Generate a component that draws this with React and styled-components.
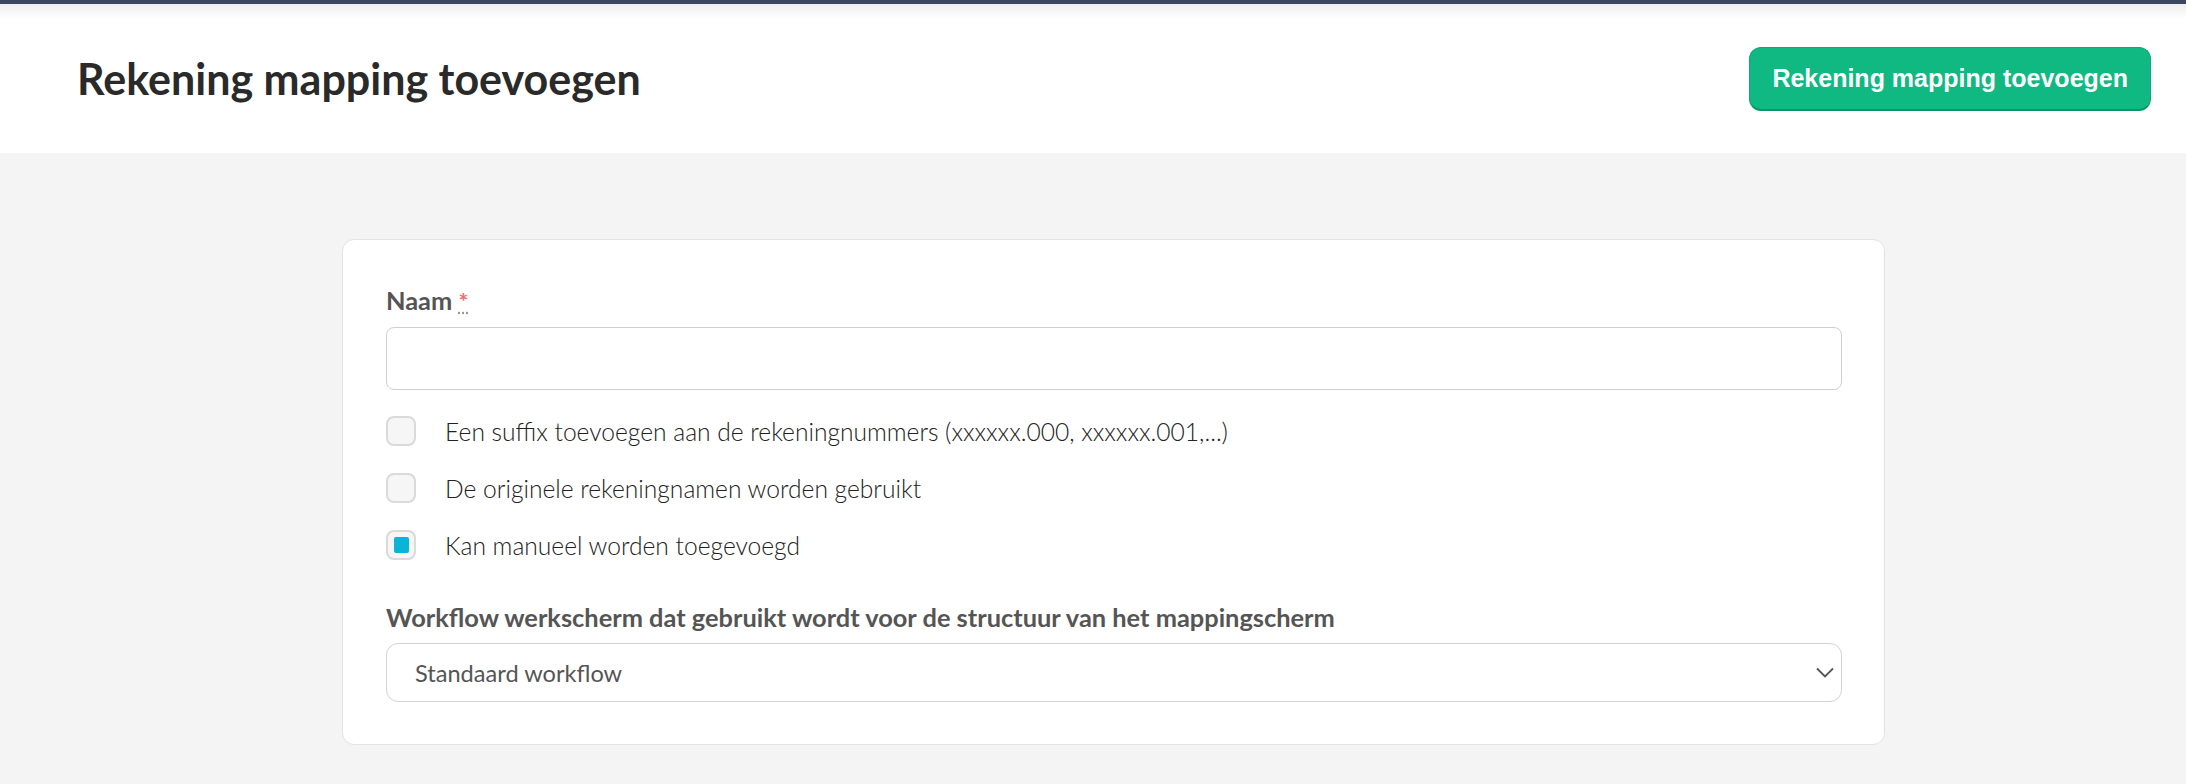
import React, { useState } from "react";
import styled, { createGlobalStyle } from "styled-components";

const GlobalStyle = createGlobalStyle`
  * {
    box-sizing: border-box;
  }
  body {
    margin: 0;
    background: #f4f4f4;
    font-family: Lato, "Open Sans", sans-serif;
    color: #333;
  }
`;

const options = [
  { id: "suffix", label: "Een suffix toevoegen aan de rekeningnummers (xxxxxx.000, xxxxxx.001,...)" },
  { id: "original", label: "De originele rekeningnamen worden gebruikt" },
  { id: "manual", label: "Kan manueel worden toegevoegd" },
];

const App = () => {
  const [checked, setChecked] = useState({ suffix: false, original: false, manual: true });
  const [name, setName] = useState("");

  const toggle = (id) => setChecked({ ...checked, [id]: !checked[id] });

  return (
    <>
      <GlobalStyle />
      <Page>
        <TopBar />
        <Header>
          <Title>Rekening mapping toevoegen</Title>
          <PrimaryButton>Rekening mapping toevoegen</PrimaryButton>
        </Header>
        <Main>
          <Card>
            <Field>
              <Label htmlFor="naam">
                Naam <Required title="verplicht">*</Required>
              </Label>
              <TextInput id="naam" value={name} onChange={(e) => setName(e.target.value)} />
            </Field>

            <CheckList>
              {options.map((opt) => (
                <CheckRow key={opt.id} onClick={() => toggle(opt.id)}>
                  <CheckBox>{checked[opt.id] && <CheckMark />}</CheckBox>
                  <CheckLabel>{opt.label}</CheckLabel>
                </CheckRow>
              ))}
            </CheckList>

            <Field>
              <Label htmlFor="workflow">
                Workflow werkscherm dat gebruikt wordt voor de structuur van het mappingscherm
              </Label>
              <SelectWrap>
                <Select id="workflow" defaultValue="standaard">
                  <option value="standaard">Standaard workflow</option>
                </Select>
                <Chevron width="18" height="11" viewBox="0 0 18 11" fill="none">
                  <path d="M1 1.5 L9 9.5 L17 1.5" stroke="#555" strokeWidth="1.8" />
                </Chevron>
              </SelectWrap>
            </Field>
          </Card>
        </Main>
      </Page>
    </>
  );
};

export default App;

const Page = styled.div`
  min-height: 784px;
  background: #f4f4f4;
`;

const TopBar = styled.div`
  height: 4px;
  background: #3a4862;
`;

const Header = styled.header`
  height: 149px;
  display: flex;
  align-items: center;
  justify-content: space-between;
  padding: 0 35px 0 77px;
  background: linear-gradient(#efefef 0px, #ffffff 16px);
`;

const Title = styled.h1`
  margin: 0;
  font-family: Lato, sans-serif;
  font-weight: 700;
  font-size: 43px;
  color: #2a2a2a;
`;

const PrimaryButton = styled.button`
  height: 64px;
  padding: 0 22px;
  border: 1px solid #0ea874;
  border-bottom: 2px solid #0b9466;
  border-radius: 12px;
  background: #0fb981;
  color: #fff;
  font-family: "Liberation Sans", Arial, sans-serif;
  font-weight: 700;
  font-size: 25px;
  cursor: pointer;
`;

const Main = styled.main`
  padding: 86px 301px 38px 342px;
`;

const Card = styled.section`
  background: #fff;
  border: 1px solid #e3e3e3;
  border-radius: 12px;
  padding: 47px 42px 42px 43px;
  display: flex;
  flex-direction: column;
`;

const Field = styled.div`
  display: flex;
  flex-direction: column;
  gap: 12px;
`;

const Label = styled.label`
  font-family: Lato, sans-serif;
  font-weight: 700;
  font-size: 25.4px;
  line-height: 27px;
  color: #555;
`;

const Required = styled.abbr`
  color: #f26b6b;
  font-size: 23px;
  text-decoration: underline dotted #999;
  cursor: help;
`;

const TextInput = styled.input`
  height: 63px;
  border: 1px solid #cfcfcf;
  border-radius: 8px;
  padding: 0 28px;
  font-family: Lato, sans-serif;
  font-size: 22px;
  color: #444;
  outline: none;
`;

const CheckList = styled.div`
  display: flex;
  flex-direction: column;
  gap: 27px;
  margin: 26px 0 44px;
`;

const CheckRow = styled.div`
  display: flex;
  align-items: center;
  gap: 29px;
  cursor: pointer;
`;

const CheckBox = styled.span`
  width: 30px;
  height: 30px;
  flex: none;
  display: flex;
  align-items: center;
  justify-content: center;
  border: 2px solid #dadada;
  border-radius: 8px;
  background: #f6f6f6;
`;

const CheckMark = styled.span`
  width: 15px;
  height: 16px;
  border-radius: 2px;
  background: #0ab4d7;
`;

const CheckLabel = styled.span`
  font-family: Lato, sans-serif;
  font-weight: 300;
  font-size: 24.6px;
  color: #222;
`;

const SelectWrap = styled.div`
  position: relative;
`;

const Select = styled.select`
  width: 100%;
  height: 59px;
  appearance: none;
  border: 1px solid #d2d2d2;
  border-radius: 12px;
  background: #fff;
  padding: 0 28px;
  font-family: Lato, sans-serif;
  font-size: 23.6px;
  color: #555;
  outline: none;
`;

const Chevron = styled.svg`
  position: absolute;
  right: 8px;
  top: 24px;
  pointer-events: none;
`;
